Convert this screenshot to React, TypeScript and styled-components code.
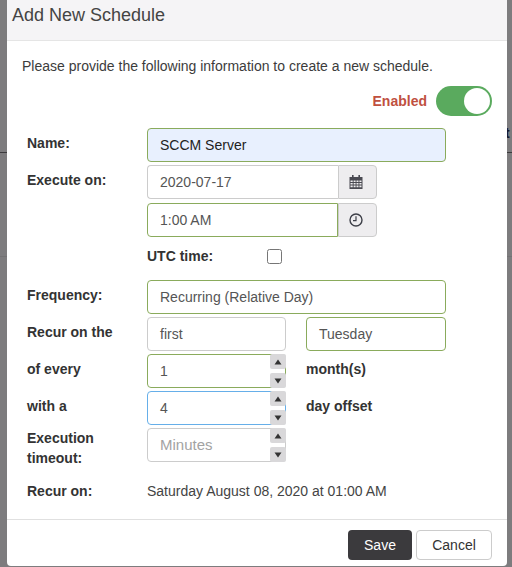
import styled, { createGlobalStyle } from 'styled-components'

const GlobalStyle = createGlobalStyle`
  html, body {
    margin: 0;
    padding: 0;
    background: #7d7c7e;
  }
  body {
    font-family: "Liberation Sans", Arial, sans-serif;
    font-size: 14px;
    color: #333;
  }
`

const CalendarIcon = () => (
  <svg width="14" height="14" viewBox="0 0 14 14" fill="#4a4a52">
    <rect x="3" y="0" width="1.6" height="3" />
    <rect x="9.4" y="0" width="1.6" height="3" />
    <path d="M0.5 2h13v12h-13z M1.5 5.5v1.6h2.2v-1.6z M4.6 5.5v1.6h2v-1.6z M7.5 5.5v1.6h2v-1.6z M10.4 5.5v1.6h2.1v-1.6z M1.5 8v1.6h2.2v-1.6z M4.6 8v1.6h2v-1.6z M7.5 8v1.6h2v-1.6z M10.4 8v1.6h2.1v-1.6z M1.5 10.5v1.8h2.2v-1.8z M4.6 10.5v1.8h2v-1.8z M7.5 10.5v1.8h2v-1.8z M10.4 10.5v1.8h2.1v-1.8z" fillRule="evenodd" />
  </svg>
)

const ClockIcon = () => (
  <svg width="14" height="14" viewBox="0 0 14 14" fill="none" stroke="#3d3f48">
    <circle cx="7" cy="7" r="6" strokeWidth="1.4" />
    <path d="M7 3.2V7.6H4" strokeWidth="1.2" />
  </svg>
)

const Spinner = () => (
  <SpinColumn>
    <SpinButton>
      <svg width="8" height="6" viewBox="0 0 8 6"><path d="M4 0.5L7.5 5.5H0.5z" fill="#333" /></svg>
    </SpinButton>
    <SpinButton>
      <svg width="8" height="6" viewBox="0 0 8 6"><path d="M4 5.5L0.5 0.5H7.5z" fill="#333" /></svg>
    </SpinButton>
  </SpinColumn>
)

const App = () => {
  return (
    <>
      <GlobalStyle />
      <Page>
        <BehindText>t</BehindText>
        <Modal>
          <Header>
            <Title>Add New Schedule</Title>
          </Header>
          <Body>
            <Intro>Please provide the following information to create a new schedule.</Intro>
            <ToggleRow>
              <EnabledLabel>Enabled</EnabledLabel>
              <Toggle>
                <Knob />
              </Toggle>
            </ToggleRow>
            <Form>
              <Label>Name:</Label>
              <Field $state="autofill">SCCM Server</Field>

              <Label>Execute on:</Label>
              <Group>
                <GroupField>2020-07-17</GroupField>
                <Addon>
                  <CalendarIcon />
                </Addon>
              </Group>

              <span />
              <Group $offset>
                <GroupField $state="valid">1:00 AM</GroupField>
                <Addon>
                  <ClockIcon />
                </Addon>
              </Group>

              <span />
              <UtcRow>
                <UtcLabel>UTC time:</UtcLabel>
                <Checkbox />
              </UtcRow>

              <Label>Frequency:</Label>
              <Field $state="valid">Recurring (Relative Day)</Field>

              <Label>Recur on the</Label>
              <Pair>
                <Field>first</Field>
                <Field $state="valid">Tuesday</Field>
              </Pair>

              <Label>of every</Label>
              <Pair>
                <NumberBox>
                  <Field $state="valid">1</Field>
                  <Spinner />
                </NumberBox>
                <Unit>month(s)</Unit>
              </Pair>

              <Label>with a</Label>
              <Pair>
                <NumberBox>
                  <Field $state="focus">4</Field>
                  <Spinner />
                </NumberBox>
                <Unit>day offset</Unit>
              </Pair>

              <TallLabel>Execution timeout:</TallLabel>
              <Pair>
                <NumberBox>
                  <Field $state="placeholder">Minutes</Field>
                  <Spinner />
                </NumberBox>
              </Pair>
            </Form>
            <RecurRow>
              <RecurLabel>Recur on:</RecurLabel>
              <RecurValue>Saturday August 08, 2020 at 01:00 AM</RecurValue>
            </RecurRow>
          </Body>
          <Footer>
            <SaveButton>Save</SaveButton>
            <CancelButton>Cancel</CancelButton>
          </Footer>
        </Modal>
      </Page>
    </>
  )
}

export default App

type FieldState = 'valid' | 'focus' | 'autofill' | 'placeholder'

const fieldBorder = (state?: FieldState) => {
  if (state === 'valid' || state === 'autofill') return '#8aab5c'
  if (state === 'focus') return '#66afe9'
  return '#ccc'
}

const Page = styled.div`
  position: relative;
  width: 512px;
  height: 567px;
  overflow: hidden;
  padding-left: 7px;
  box-sizing: border-box;
  background:
    linear-gradient(#3c3b3d, #3c3b3d) 0 152px / 100% 1px no-repeat,
    linear-gradient(#737274, #737274) 0 256px / 100% 1px no-repeat,
    #7d7c7e;
`
const BehindText = styled.span`
  position: absolute;
  left: 505px;
  top: 125px;
  font-weight: bold;
  font-size: 14px;
  color: #16182c;
`
const Modal = styled.div`
  position: relative;
  width: 500px;
  height: 566px;
  background: #fff;
  border-radius: 0 0 4px 4px;
  display: flex;
  flex-direction: column;
`
const Header = styled.div`
  height: 36px;
  background: #f5f4f6;
  border-bottom: 1px solid #e5e5e5;
  padding: 4px 5px 0;
`
const Title = styled.div`
  font-size: 18px;
  line-height: 22px;
  color: #444;
`
const Body = styled.div`
  flex: 1;
  padding: 15px 15px 0;
`
const Intro = styled.div`
  line-height: 20px;
  color: #3c3c3c;
`
const ToggleRow = styled.div`
  display: flex;
  justify-content: flex-end;
  align-items: center;
  gap: 9px;
  margin-top: 10px;
`
const EnabledLabel = styled.span`
  font-weight: bold;
  color: #c0503f;
`
const Toggle = styled.div`
  width: 56px;
  height: 30px;
  border-radius: 15px;
  background: #5aaa5e;
  box-sizing: border-box;
  display: flex;
  justify-content: flex-end;
  align-items: center;
  padding-right: 2px;
`
const Knob = styled.div`
  width: 26px;
  height: 26px;
  border-radius: 50%;
  background: #fff;
`
const Form = styled.div`
  display: grid;
  grid-template-columns: 120px 299px;
  grid-auto-rows: minmax(34px, auto);
  row-gap: 3px;
  padding-left: 5px;
  margin-top: 12px;
`
const Label = styled.div`
  font-weight: bold;
  line-height: 20px;
  padding-top: 5px;
`
const TallLabel = styled(Label)`
  padding-top: 0;
  width: 90px;
`
const Field = styled.div<{ $state?: FieldState }>`
  height: 34px;
  box-sizing: border-box;
  border: 1px solid ${(p) => fieldBorder(p.$state)};
  border-radius: 4px;
  padding: 0 12px;
  line-height: 32px;
  font-size: ${(p) => (p.$state === 'placeholder' ? '15px' : '14px')};
  background: ${(p) => (p.$state === 'autofill' ? '#e8f0fe' : '#fff')};
  color: ${(p) => (p.$state === 'autofill' ? '#222' : p.$state === 'placeholder' ? '#a3a3a3' : '#555')};
`
const Group = styled.div<{ $offset?: boolean }>`
  display: flex;
  width: 230px;
  margin-top: ${(p) => (p.$offset ? '1px' : '0')};
`
const GroupField = styled(Field)`
  flex: 1;
  border-radius: 4px 0 0 4px;
  border-right-width: ${(p) => (p.$state ? '1px' : '0')};
`
const Addon = styled.div`
  width: 39px;
  height: 34px;
  box-sizing: border-box;
  display: flex;
  align-items: center;
  justify-content: center;
  background: #eeedef;
  border: 1px solid #ccc;
  border-radius: 0 4px 4px 0;
  padding-right: 3px;
`
const UtcRow = styled.div`
  display: flex;
  align-items: center;
  height: 37px;
  box-sizing: border-box;
  padding-bottom: 5px;
`
const UtcLabel = styled.span`
  font-weight: bold;
  width: 120px;
`
const Checkbox = styled.div`
  width: 15px;
  height: 15px;
  box-sizing: border-box;
  border: 1px solid #767676;
  border-radius: 2.5px;
  background: #fff;
`
const Pair = styled.div`
  display: grid;
  grid-template-columns: 139px 140px;
  column-gap: 20px;
  align-items: start;
`
const NumberBox = styled.div`
  position: relative;
  height: 34px;
`
const SpinColumn = styled.div`
  position: absolute;
  top: 0;
  right: 0;
  bottom: 0;
  width: 16px;
  display: flex;
  flex-direction: column;
  justify-content: space-between;
`
const SpinButton = styled.div`
  height: 15px;
  background: #d9d8da;
  border-radius: 2px;
  display: flex;
  align-items: center;
  justify-content: center;
`
const Unit = styled.div`
  font-weight: bold;
  line-height: 20px;
  padding-top: 5px;
`
const RecurRow = styled.div`
  display: flex;
  margin-top: 13px;
  padding-left: 5px;
  line-height: 20px;
`
const RecurLabel = styled.div`
  font-weight: bold;
  width: 120px;
`
const RecurValue = styled.div`
  color: #444;
`
const Footer = styled.div`
  height: 47px;
  border-top: 1px solid #e0e0e0;
  display: flex;
  justify-content: flex-end;
  align-items: flex-start;
  gap: 4px;
  padding: 10px 15px 0 0;
  box-sizing: border-box;
`
const SaveButton = styled.div`
  width: 64px;
  height: 30px;
  box-sizing: border-box;
  border-radius: 4px;
  background: #3b3a3d;
  color: #fff;
  text-align: center;
  line-height: 30px;
`
const CancelButton = styled(SaveButton)`
  width: 76px;
  background: #fff;
  color: #333;
  border: 1px solid #ccc;
  line-height: 28px;
`
